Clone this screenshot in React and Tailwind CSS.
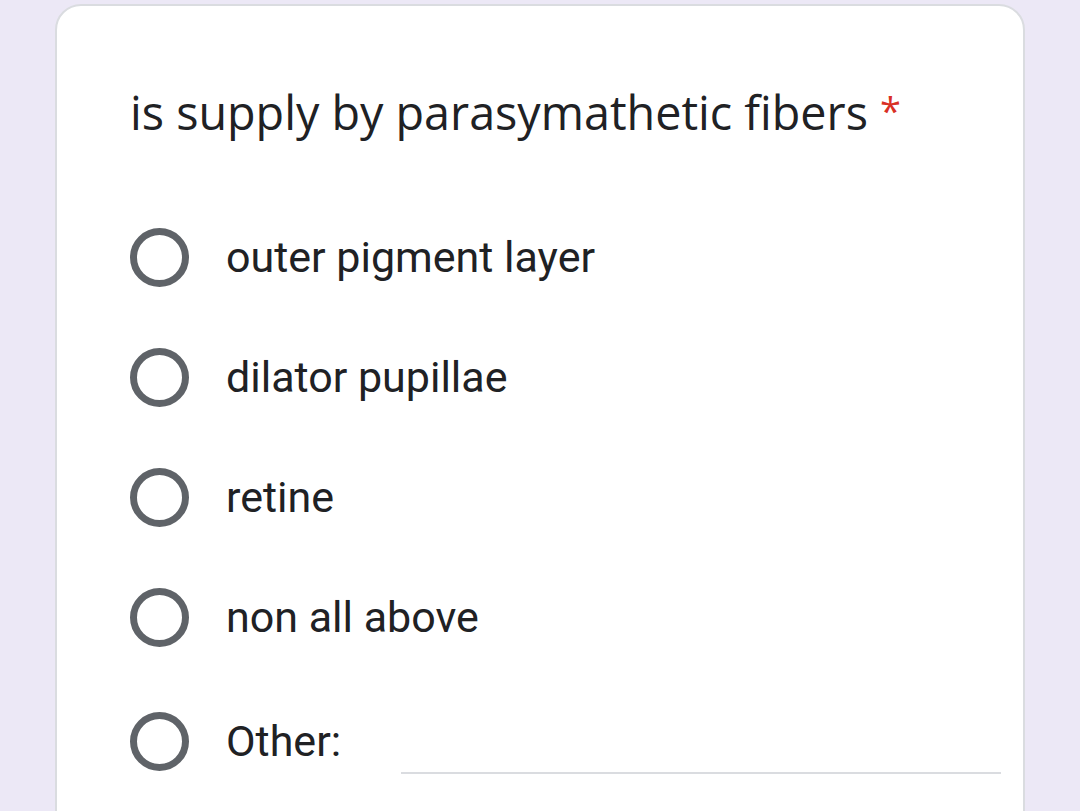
import React from 'react'

const options = ['outer pigment layer', 'dilator pupillae', 'retine', 'non all above']

function Radio() {
  return <span className="block h-[59px] w-[59px] shrink-0 rounded-full border-[7px] border-[#5f6368]" />
}

export default function App() {
  return (
    <div className="h-[811px] w-[1080px] overflow-hidden bg-[#ece8f6] pl-[55px] pr-[55px] pt-[4px]">
      <div className="h-[900px] rounded-t-[26px] border-2 border-[#dadce0] bg-white pl-[73px] pr-[22px] pt-[78px]">
        <h1 className="flex items-start text-[46.7px] leading-[56px] text-[#202124]" style={{ fontFamily: '"Open Sans", Roboto, sans-serif' }}>
          is supply by parasymathetic fibers
          <span className="ml-[12px] mt-[-2px] text-[38px] text-[#d93025]">*</span>
        </h1>
        <div className="mt-[88px] flex flex-col gap-[61px]" style={{ fontFamily: 'Roboto, sans-serif' }}>
          {options.map((o) => (
            <div key={o} className="flex items-center">
              <Radio />
              <span className="ml-[37px] text-[43px] leading-[59px] text-[#202124]">{o}</span>
            </div>
          ))}
          <div className="flex items-center">
            <Radio />
            <span className="ml-[37px] w-[175px] text-[43px] leading-[59px] text-[#202124]">Other:</span>
            <div className="mt-[64px] h-[2px] flex-1 bg-[#dadce0]" />
          </div>
        </div>
      </div>
    </div>
  )
}
